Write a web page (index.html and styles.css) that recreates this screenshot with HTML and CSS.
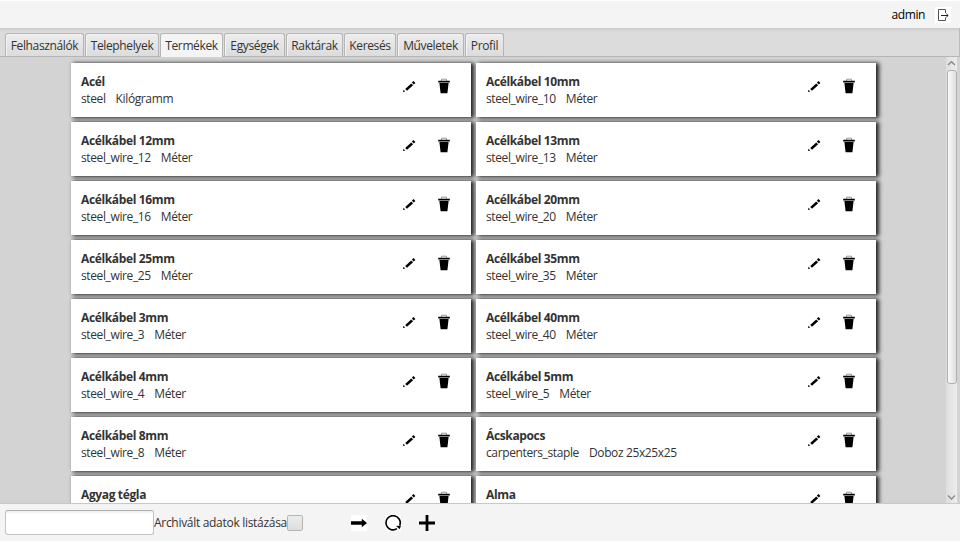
FILE: index.html
```html
<!DOCTYPE html>
<html lang="hu">
<head>
<meta charset="utf-8">
<title>Termékek</title>
<link rel="stylesheet" href="styles.css">
</head>
<body>
<svg class="defs" aria-hidden="true">
  <symbol id="pencil" viewBox="0 0 16 16"><path d="M2 14l.5-2.2 1.7 1.7z M4.2 11l6-5.6 1.9 1.9-6.1 5.5z M10.9 4.5l1.6-1.5 1.9 1.9-1.6 1.5z"/></symbol>
  <symbol id="trash" viewBox="0 0 16 16"><path d="M5.5 2.8V1.2h5v1.6" fill="none" stroke="#999"/><path d="M2.2 2.8h11.6v1.7H2.2z M3.4 4.9h9.2l-1.2 10.4H4.6z"/></symbol>
</svg>
<div class="window">
  <header class="topbar"><span class="user">admin</span>
    <svg class="logout" viewBox="0 0 16 16"><path d="M10.5 6V2.5h-7v11h7V10.5" fill="none" stroke="#555"/><path d="M6 8.5h7M11.3 6.8l1.9 1.7-1.9 1.7" fill="none" stroke="#222"/></svg>
  </header>
  <nav class="tabs" id="tabs"></nav>
  <main class="content">
    <div class="viewport"><div class="grid" id="grid"></div></div>
    <div class="scrollbar">
      <svg class="arrow" viewBox="0 0 11 12"><path d="M2 8L5.5 4.7 9 8" fill="none" stroke="#8a8a8a" stroke-width="1.4"/></svg>
      <div class="thumb"></div>
      <svg class="arrow end" viewBox="0 0 11 12"><path d="M2 4.5L5.5 8 9 4.5" fill="none" stroke="#8a8a8a" stroke-width="1.4"/></svg>
    </div>
  </main>
  <footer class="bottombar">
    <input class="search" type="text" aria-label="Keresés">
    <span class="archived">Archivált adatok listázása</span><span class="check"></span>
    <svg class="act go" viewBox="0 0 16 16"><path d="M0 6.2h10.8V3.8L16 8l-5.2 4.2V9.8H0z"/></svg>
    <svg class="act reload" viewBox="0 0 16 16"><path d="M12 13.7A7.1 7.1 0 1 1 14.7 10.4" fill="none" stroke="#000" stroke-width="1.6"/><path d="M11.2 10.9l4.8-.4-1.3 3.8z"/></svg>
    <svg class="act add" viewBox="0 0 16 16"><path d="M6.6 0h2.8v6.6H16v2.8H9.4V16H6.6V9.4H0V6.6h6.6z"/></svg>
  </footer>
</div>
<script src="app.js"></script>
</body>
</html>
```
FILE: styles.css
```css
* { box-sizing: border-box; }
body { margin: 0; background: #fff; overflow: hidden; font: 12px/17px "Open Sans", "Noto Sans", sans-serif; color: #333; }
.defs { display: none; }
.window { width: 960px; height: 540px; margin-top: 1px; background: #f4f4f4; display: flex; flex-direction: column; }
.topbar { height: 27px; display: flex; justify-content: flex-end; align-items: center; padding-right: 9px; color: #000; }
.user { margin-right: 10px; letter-spacing: -.4px; }
.logout { width: 16px; height: 16px; background: #fff; }
.tabs { height: 29px; padding: 5px 5px 0; display: flex; gap: 1px; background: linear-gradient(#cbcbcb, #dcdcdc 4px); border-right: 1px solid #bbb; border-bottom: 1px solid #b5b5b5; }
.tab { height: 23px; border: 1px solid #b5b5b5; border-bottom: 0; border-radius: 3px 3px 0 0; background: linear-gradient(#ededed, #dcdcdc); box-shadow: inset 1px 1px #f4f4f4; white-space: nowrap; display: flex; justify-content: center; padding-top: 3px; letter-spacing: -.36px; }
.tab.active { height: 24px; background: #f4f4f4; }
.content { height: 446px; display: flex; background: #d3d3d3; overflow: hidden; }
.viewport { flex: 1; padding: 6px 0 0 71px; overflow: hidden; }
.grid { display: grid; grid-template-columns: 400px 400px; grid-auto-rows: 54px; gap: 5px; }
.card { background: #fff; box-shadow: 2px 0 4px .5px #222; padding: 10px 19px 0 10px; display: flex; }
.info { flex: 1; }
.name { font-weight: 700; letter-spacing: -.36px; }
.meta { display: flex; gap: 10px; letter-spacing: -.38px; }
.icon { width: 16px; height: 16px; margin: 5px 0 0; fill: #000; }
.icon.trash { margin-left: 19px; }
.scrollbar { width: 11px; margin-right: 3px; display: flex; flex-direction: column; background: linear-gradient(90deg, #dedede, #ededed); }
.arrow { width: 11px; height: 12px; }
.thumb { height: 314px; width: 10px; margin: 1px 0 0 1px; border: 1px solid #b0b0b0; border-radius: 3px; background: linear-gradient(90deg, #fafafa, #dedede); }
.end { margin-top: auto; }
.bottombar { height: 38px; border-top: 1px solid #c8c8c8; display: flex; align-items: center; padding-left: 5px; }
.search { width: 149px; height: 25px; border: 1px solid #c3c3c3; border-top-color: #b0b0b0; border-radius: 3px; background: linear-gradient(#eee, #fff 3px); }
.archived { width: 133px; white-space: nowrap; letter-spacing: -.3px; }
.check { width: 16px; height: 16px; border: 1px solid #b5b5b5; border-radius: 2px; background: linear-gradient(#ececec, #dedede); }
.act { width: 16px; height: 16px; margin-left: 18px; }
.go { margin-left: 48px; background: #fff; }
.reload { background: #fff; }
```
FILE: app.js
```js
const tabs = [["Felhasználók", 79], ["Telephelyek", 74], ["Termékek", 63], ["Egységek", 61], ["Raktárak", 57], ["Keresés", 52], ["Műveletek", 67], ["Profil", 39]];
document.getElementById("tabs").innerHTML = tabs.map(([t, w]) =>
  `<div class="tab${t === "Termékek" ? " active" : ""}" style="width:${w}px">${t}</div>`).join("");

const wire = n => [`Acélkábel ${n}mm`, `steel_wire_${n}`, "Méter"];
const items = [["Acél", "steel", "Kilógramm"], ...[10, 12, 13, 16, 20, 25, 35, 3, 40, 4, 5, 8].map(wire),
  ["Ácskapocs", "carpenters_staple", "Doboz 25x25x25"], ["Agyag tégla", "", ""], ["Alma", "", ""]];
document.getElementById("grid").innerHTML = items.map(([name, code, unit]) =>
  `<div class="card"><div class="info"><div class="name">${name}</div><div class="meta"><span>${code}</span><span>${unit}</span></div></div>
  <svg class="icon"><use href="#pencil"/></svg><svg class="icon trash"><use href="#trash"/></svg></div>`).join("");
```
